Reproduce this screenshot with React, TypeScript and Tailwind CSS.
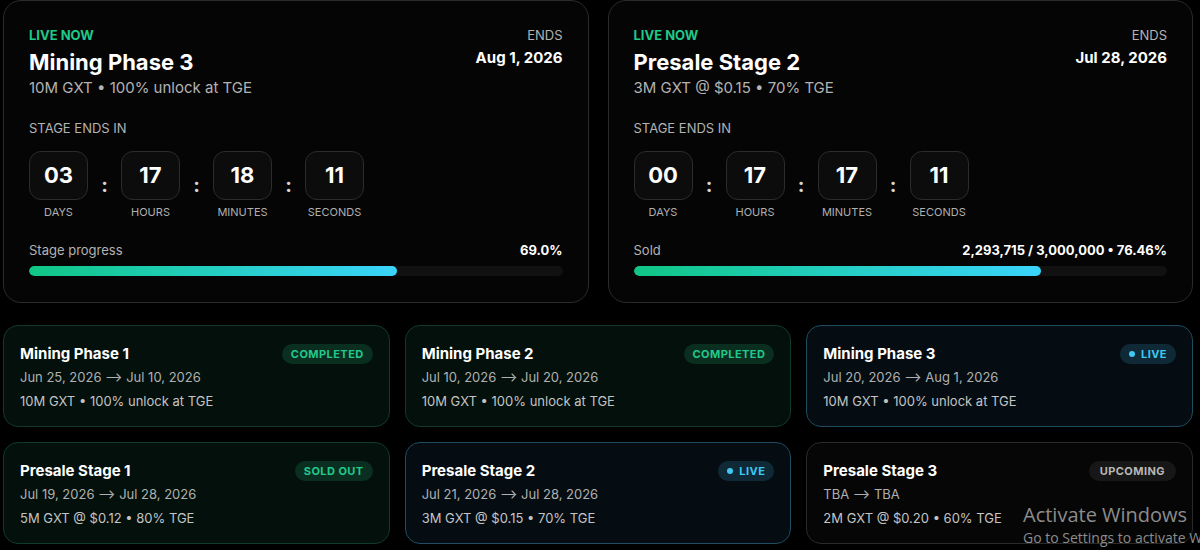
import React from 'react';

type Status = 'completed' | 'soldout' | 'live' | 'upcoming';

const STAGES: { name: string; dates: string; info: string; status: Status }[] = [
  { name: 'Mining Phase 1', dates: 'Jun 25, 2026 ⟶ Jul 10, 2026', info: '10M GXT • 100% unlock at TGE', status: 'completed' },
  { name: 'Mining Phase 2', dates: 'Jul 10, 2026 ⟶ Jul 20, 2026', info: '10M GXT • 100% unlock at TGE', status: 'completed' },
  { name: 'Mining Phase 3', dates: 'Jul 20, 2026 ⟶ Aug 1, 2026', info: '10M GXT • 100% unlock at TGE', status: 'live' },
  { name: 'Presale Stage 1', dates: 'Jul 19, 2026 ⟶ Jul 28, 2026', info: '5M GXT @ $0.12 • 80% TGE', status: 'soldout' },
  { name: 'Presale Stage 2', dates: 'Jul 21, 2026 ⟶ Jul 28, 2026', info: '3M GXT @ $0.15 • 70% TGE', status: 'live' },
  { name: 'Presale Stage 3', dates: 'TBA ⟶ TBA', info: '2M GXT @ $0.20 • 60% TGE', status: 'upcoming' },
];

const cardStyles: Record<Status, string> = {
  completed: 'bg-[#03100b] border-[#123a2b]',
  soldout: 'bg-[#03100b] border-[#123a2b]',
  live: 'bg-[#050d13] border-[#1f4c60]',
  upcoming: 'bg-[#060606] border-[#2a2a2a]',
};

function Badge({ status }: { status: Status }) {
  if (status === 'live') {
    return (
      <span className="flex items-center gap-[6px] h-[20px] px-[9px] rounded-full bg-[#0f2a36] text-[#3fc8f2] text-[11px] font-bold tracking-[0.04em]">
        <span className="w-[6px] h-[6px] rounded-full bg-[#3fc8f2]" />
        LIVE
      </span>
    );
  }
  if (status === 'upcoming') {
    return (
      <span className="flex items-center h-[20px] px-[11px] rounded-full bg-[#171717] text-[#b8b8b8] text-[11px] font-bold tracking-[0.04em]">
        UPCOMING
      </span>
    );
  }
  return (
    <span className="flex items-center h-[20px] px-[9px] rounded-full bg-[#0a2e20] text-[#22c98b] text-[11px] font-bold tracking-[0.04em]">
      {status === 'completed' ? 'COMPLETED' : 'SOLD OUT'}
    </span>
  );
}

function Countdown({ values }: { values: string[] }) {
  const labels = ['DAYS', 'HOURS', 'MINUTES', 'SECONDS'];
  return (
    <div className="flex items-center mt-[15px]">
      {values.map((v, i) => (
        <React.Fragment key={labels[i]}>
          {i > 0 && <span className="w-[33px] text-center text-[20px] font-bold text-[#d4d4d4]">:</span>}
          <div className="flex flex-col items-center w-[59px]">
            <div className="w-[59px] h-[49px] rounded-[12px] border border-[#2c2c2c] bg-[#0c0c0c] flex items-center justify-center text-[22px] font-bold text-white">
              {v}
            </div>
            <span className="mt-[5px] text-[11px] leading-[14px] text-[#b0b0b0] whitespace-nowrap">{labels[i]}</span>
          </div>
        </React.Fragment>
      ))}
    </div>
  );
}

function LiveCard(props: {
  title: string;
  sub: string;
  ends: string;
  countdown: string[];
  leftLabel: string;
  rightLabel: string;
  pct: number;
}) {
  return (
    <div className="rounded-[18px] border border-[#2b2b2b] bg-[#050505] px-[25px] pt-[26px] pb-[26px]">
      <div className="flex justify-between">
        <div>
          <div className="text-[13px] leading-[16px] font-bold text-[#1fc98a]">LIVE NOW</div>
          <div className="mt-[5px] text-[22px] leading-[28px] font-bold text-white">{props.title}</div>
          <div className="mt-[2px] text-[15px] leading-[20px] text-[#b3b3b3]">{props.sub}</div>
        </div>
        <div className="text-right">
          <div className="text-[13px] leading-[16px] text-[#b3b3b3]">ENDS</div>
          <div className="mt-[5px] text-[15px] leading-[20px] font-bold text-white">{props.ends}</div>
        </div>
      </div>
      <div className="mt-[22px] text-[13px] leading-[16px] text-[#b3b3b3]">STAGE ENDS IN</div>
      <Countdown values={props.countdown} />
      <div className="mt-[23px] flex justify-between text-[13px] leading-[16px]">
        <span className="text-[#b3b3b3]">{props.leftLabel}</span>
        <span className="font-bold text-white">{props.rightLabel}</span>
      </div>
      <div className="mt-[8px] h-[10px] rounded-full bg-[#111111] overflow-hidden">
        <div
          className="h-full rounded-full bg-gradient-to-r from-[#10c684] to-[#3ad4fb]"
          style={{ width: `${props.pct}%` }}
        />
      </div>
    </div>
  );
}

export default function App() {
  return (
    <div
      className="relative min-h-[550px] bg-black text-white px-[3px] overflow-hidden"
      style={{ fontFamily: 'Inter, "Noto Sans", sans-serif' }}
    >
      <div className="grid grid-cols-2 gap-[19px] w-[1190px]">
        <LiveCard
          title="Mining Phase 3"
          sub="10M GXT • 100% unlock at TGE"
          ends="Aug 1, 2026"
          countdown={['03', '17', '18', '11']}
          leftLabel="Stage progress"
          rightLabel="69.0%"
          pct={69}
        />
        <LiveCard
          title="Presale Stage 2"
          sub="3M GXT @ $0.15 • 70% TGE"
          ends="Jul 28, 2026"
          countdown={['00', '17', '17', '11']}
          leftLabel="Sold"
          rightLabel="2,293,715 / 3,000,000 • 76.46%"
          pct={76.46}
        />
      </div>

      {/* stage list */}
      <div className="grid grid-cols-3 gap-[15px] mt-[22px] w-[1190px]">
        {STAGES.map((s) => (
          <div key={s.name} className={`h-[102px] rounded-[15px] border px-[16px] pt-[18px] ${cardStyles[s.status]}`}>
            <div className="flex items-center justify-between h-[20px]">
              <span className="text-[15px] font-bold text-white">{s.name}</span>
              <Badge status={s.status} />
            </div>
            <div className="mt-[3px] text-[13px] leading-[20px] text-[#b0b0b0]">{s.dates}</div>
            <div className="mt-[4px] text-[13px] leading-[20px] text-[#c4c4c4]">{s.info}</div>
          </div>
        ))}
      </div>

      {/* os watermark */}
      <div
        className="absolute left-[1023px] top-[502px] text-[#8c8c8c] whitespace-nowrap pointer-events-none"
        style={{ fontFamily: '"Open Sans", "Noto Sans", sans-serif' }}
      >
        <div className="text-[20px] leading-[26px]">Activate Windows</div>
        <div className="text-[14px] leading-[20px]">Go to Settings to activate Windows.</div>
      </div>
    </div>
  );
}
